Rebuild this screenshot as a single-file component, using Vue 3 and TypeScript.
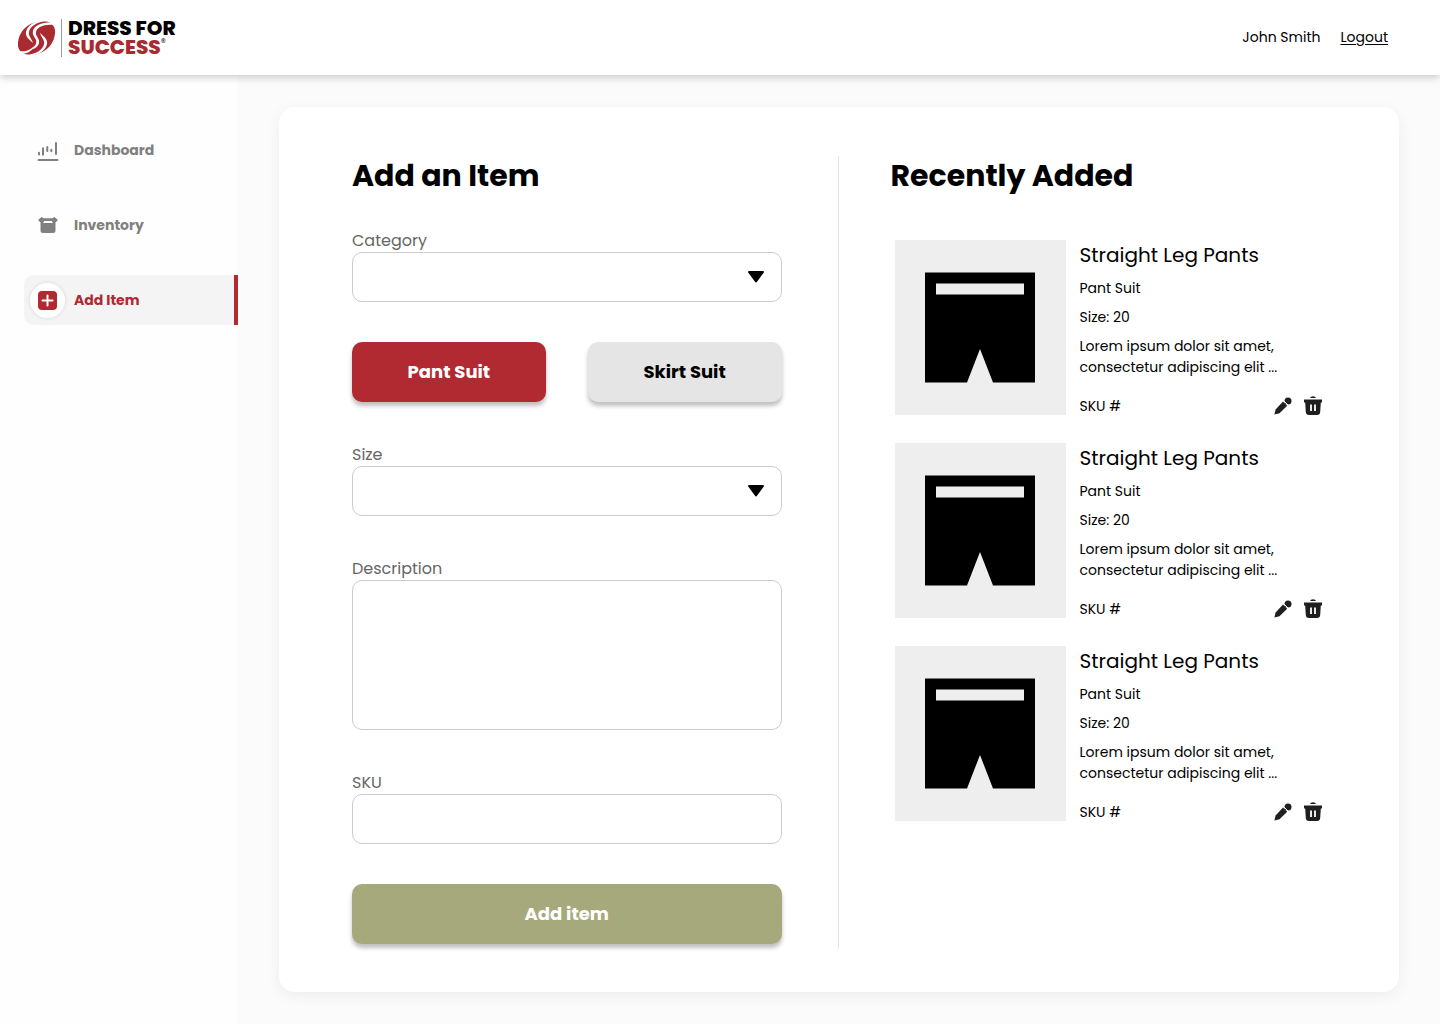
<script setup lang="ts">
import { ref } from 'vue'

interface Item {
  id: number
  name: string
  category: string
  size: number
  description: string
}

const suit = ref<'pant' | 'skirt'>('pant')
const category = ref('')
const size = ref('')
const description = ref('')
const sku = ref('')

const items = ref<Item[]>(
  [1, 2, 3].map((id) => ({
    id,
    name: 'Straight Leg Pants',
    category: 'Pant Suit',
    size: 20,
    description: 'Lorem ipsum dolor sit amet, consectetur adipiscing elit ...',
  })),
)
</script>

<template>
  <div class="page">
    <header class="topbar">
      <a class="brand" href="#">
        <svg class="emblem" viewBox="0 0 38 34" width="38" height="34" aria-hidden="true">
          <path fill="#a92a31" d="M24 0C33 0 38 5 37 12.5C36 22 30 29 22 32C20 33 16 34 13 34C4 34-1 29 0 21.500C1 12 7 5 15 2C18 1 21 0 24 0Z" />
          <g fill="#fff">
            <path d="M29 0C19 1 12 5 11 11C10 15 14 18 15 22C12 19 7 16 8 11C9 5 16 0 25-1Z" />
            <path d="M36 4C26 3 19 6 18 11C17 15 22 17 21 22C20 26 16 28 12 29C17 25 19 23 18 19C17 16 14 14 15 10C16 4 26 0 35 2Z" />
            <path d="M8 34C18 33 25 29 26 23C27 19 23 16 22 12C25 15 30 18 29 23C28 29 21 34 12 35Z" />
            <path d="M1 30C7 31 13 29 16 25C14 31 7 34 2 32Z" />
          </g>
        </svg>
        <span class="wordmark">
          <span>DRESS FOR</span>
          <span class="red">SUCCESS<sup>®</sup></span>
        </span>
      </a>
      <div class="account">
        <span>John Smith</span>
        <a href="#">Logout</a>
      </div>
    </header>

    <div class="body">
      <nav class="sidebar">
        <a class="nav-item" href="#">
          <span class="nav-icon">
            <svg viewBox="0 0 22 24" width="22" height="24" aria-hidden="true">
              <g fill="none" stroke="currentColor" stroke-width="2" stroke-linecap="round">
                <path d="M2 14.7V16.5M6 10.2V16.7M10.3 9V13M14.3 11.7V13.3M19 5V16" />
                <path d="M1.5 22H20.5" />
              </g>
            </svg>
          </span>
          Dashboard
        </a>
        <a class="nav-item" href="#">
          <span class="nav-icon">
            <svg viewBox="0 0 20 16" width="20" height="16" aria-hidden="true">
              <path fill="currentColor" d="M3.5 0L5.8 1.2H14.2L16.5 0L20 3.1L17.5 5.6V13.5Q17.5 16 15 16H5Q2.5 16 2.5 13.5V5.6L0 3.1Z" />
              <path fill="#fff" d="M6.2 4H13.8L14.8 6H5.2Z" />
            </svg>
          </span>
          Inventory
        </a>
        <a class="nav-item active" href="#" aria-current="page">
          <span class="nav-icon">
            <svg viewBox="0 0 19 19" width="19" height="19" aria-hidden="true">
              <rect width="19" height="19" rx="4" fill="currentColor" />
              <path d="M9.5 4.5V14.5M4.5 9.5H14.5" stroke="#fff" stroke-width="2" stroke-linecap="round" />
            </svg>
          </span>
          Add Item
        </a>
      </nav>

      <main class="content">
        <div class="card">
          <form class="add-form" @submit.prevent>
            <h1>Add an Item</h1>
            <div class="field">
              <label for="category">Category</label>
              <div class="select">
                <select id="category" v-model="category">
                  <option value=""></option>
                  <option>Suits</option>
                </select>
                <svg viewBox="0 0 18 13" width="18" height="13" aria-hidden="true">
                  <path d="M2 2H16L9 11.5Z" stroke="#000" stroke-width="2" stroke-linejoin="round" />
                </svg>
              </div>
            </div>
            <div class="choices">
              <button type="button" class="btn" :class="{ chosen: suit === 'pant' }" @click="suit = 'pant'">Pant Suit</button>
              <button type="button" class="btn" :class="{ chosen: suit === 'skirt' }" @click="suit = 'skirt'">Skirt Suit</button>
            </div>
            <div class="field">
              <label for="size">Size</label>
              <div class="select">
                <select id="size" v-model="size">
                  <option value=""></option>
                  <option>20</option>
                </select>
                <svg viewBox="0 0 18 13" width="18" height="13" aria-hidden="true">
                  <path d="M2 2H16L9 11.5Z" stroke="#000" stroke-width="2" stroke-linejoin="round" />
                </svg>
              </div>
            </div>
            <div class="field">
              <label for="description">Description</label>
              <textarea id="description" v-model="description"></textarea>
            </div>
            <div class="field">
              <label for="sku">SKU</label>
              <input id="sku" v-model="sku" type="text" />
            </div>
            <button type="submit" class="btn submit">Add item</button>
          </form>

          <section class="recent">
            <h2>Recently Added</h2>
            <ul>
              <li v-for="item in items" :key="item.id">
                <div class="thumb">
                  <svg viewBox="0 0 111 111" width="111" height="111" aria-hidden="true">
                    <path fill-rule="evenodd" d="M0 .5H110V110.500H68L55 77L42 110.500H0ZM11 11.500V22.500H99V11.500Z" />
                  </svg>
                </div>
                <div class="details">
                  <h3>{{ item.name }}</h3>
                  <p>{{ item.category }}</p>
                  <p>Size: {{ item.size }}</p>
                  <p class="description">{{ item.description }}</p>
                  <div class="foot">
                    <span>SKU #</span>
                    <button type="button" aria-label="Edit">
                      <svg viewBox="0 0 18 18" width="18" height="18" aria-hidden="true">
                        <path fill="#1f1f1f" d="M9 4.6L13.2 8.8L5.5 16.2L0.4 17.6L1.6 12.4Z" />
                        <circle cx="14" cy="4" r="3.5" fill="#1f1f1f" />
                        <path stroke="#fff" d="M9 3L15 9" />
                      </svg>
                    </button>
                    <button type="button" aria-label="Delete">
                      <svg viewBox="0 0 18 19" width="18" height="19" aria-hidden="true">
                        <path fill="#1f1f1f" d="M6 2Q6.5 0.2 9 0.2T12 2ZM0 3.5H18V6.5H16.8L16.2 16Q16 19 13 19H5Q2 19 1.8 16L1.2 6.5H0Z" />
                        <path stroke="#fff" stroke-width="1.8" d="M7 8.500V15M11 8.500V15" />
                      </svg>
                    </button>
                  </div>
                </div>
              </li>
            </ul>
          </section>
        </div>
      </main>
    </div>
  </div>
</template>

<style>
body {
  margin: 0;
}
</style>

<style scoped>
* {
  box-sizing: border-box;
}
.page {
  display: flex;
  flex-direction: column;
  min-height: 100vh;
  background: #fbfbfb;
  color: #000;
  font: 14px/21px Poppins, Inter, sans-serif;
}
h1, h2, h3, p, ul {
  margin: 0;
  padding: 0;
}
button {
  border: 0;
  padding: 0;
  font: inherit;
  cursor: pointer;
}
.topbar {
  position: relative;
  display: flex;
  align-items: center;
  justify-content: space-between;
  height: 75px;
  padding: 0 52px 0 18px;
  background: #fff;
  box-shadow: 0 2px 8px rgba(0, 0, 0, 0.22);
}
.brand {
  display: flex;
  align-items: center;
  gap: 5px;
  color: #000;
  text-decoration: none;
}
.wordmark {
  display: flex;
  flex-direction: column;
  padding-left: 6px;
  border-left: 1px solid #999;
  font: 800 20px/19px Poppins, Inter, sans-serif;
}
.wordmark .red {
  display: flex;
  color: #a92a31;
}
.wordmark sup {
  font-size: 10px;
  font-weight: 400;
  line-height: 10px;
  color: #333;
}
.account {
  display: flex;
  gap: 20px;
}
.account a {
  color: inherit;
  text-underline-offset: 2px;
}
.body {
  display: flex;
  flex: 1;
}
.sidebar {
  display: flex;
  flex-direction: column;
  gap: 25px;
  flex: 0 0 238px;
  padding: 50px 0 0 24px;
  background: #fefefe;
}
.nav-item {
  display: flex;
  align-items: center;
  gap: 9px;
  height: 50px;
  padding-left: 6px;
  color: #808080;
  font-weight: 700;
  text-decoration: none;
}
.nav-icon {
  display: flex;
  align-items: center;
  justify-content: center;
  width: 35px;
  height: 35px;
  border-radius: 50%;
}
.active {
  border-right: 4px solid #b12a31;
  border-radius: 10px 0 0 10px;
  background: #f4f4f4;
  color: #b12a31;
}
.active .nav-icon {
  background: #fff;
  box-shadow: 0 0 4px rgba(0, 0, 0, 0.12);
}
.content {
  flex: 1;
  padding: 32px 41px;
}
.card {
  display: grid;
  grid-template-columns: 559fr 562fr;
  padding: 49px 0 43px;
  border-radius: 16px;
  background: #fff;
  box-shadow: 0 4px 16px rgba(0, 0, 0, 0.06);
}
h1, h2 {
  font-size: 30px;
  line-height: 40px;
  font-weight: 700;
}
.add-form {
  display: flex;
  flex-direction: column;
  gap: 40px;
  padding: 0 56px 5px 73px;
}
h1 {
  margin-bottom: -8px;
}
.field {
  display: flex;
  flex-direction: column;
}
label {
  height: 24px;
  color: #666;
  font-size: 16px;
  line-height: 26px;
}
select, input, textarea {
  display: block;
  width: 100%;
  height: 50px;
  margin: 0;
  padding: 0 16px;
  border: 1px solid #ccc;
  border-radius: 10px;
  background: #fff;
  color: inherit;
  font: inherit;
  appearance: none;
}
textarea {
  height: 150px;
  padding: 12px 16px;
  resize: none;
}
.select {
  position: relative;
}
.select svg {
  position: absolute;
  top: 18px;
  right: 17px;
  pointer-events: none;
}
.choices {
  display: grid;
  grid-template-columns: 1fr 1fr;
  gap: 42px;
}
.btn {
  height: 60px;
  border-radius: 10px;
  background: #e5e5e5;
  color: #000;
  font-size: 18px;
  font-weight: 700;
  line-height: 26px;
  box-shadow: 0 4px 4px rgba(0, 0, 0, 0.25);
}
.btn.chosen {
  background: #b12a31;
  color: #fff;
}
.btn.submit {
  background: #a6a97c;
  color: #fff;
}
.recent {
  padding: 0 77px 0 52px;
  border-left: 1px solid #e5e5e5;
}
ul {
  display: flex;
  flex-direction: column;
  gap: 28px;
  margin: 44px 0 0 4px;
  list-style: none;
}
li {
  display: flex;
  gap: 14px;
}
.thumb {
  display: flex;
  align-items: center;
  justify-content: center;
  flex: 0 0 171px;
  height: 175px;
  background: #eee;
}
.details {
  display: flex;
  flex: 1;
  flex-direction: column;
  gap: 8px;
}
h3 {
  font-size: 20px;
  line-height: 30px;
  font-weight: 400;
}
.description {
  max-width: 210px;
}
.foot {
  display: flex;
  align-items: flex-end;
  gap: 12px;
  height: 18px;
  margin-top: auto;
  line-height: 18px;
}
.foot span {
  margin-right: auto;
}
.foot button {
  display: flex;
  background: none;
}
</style>
